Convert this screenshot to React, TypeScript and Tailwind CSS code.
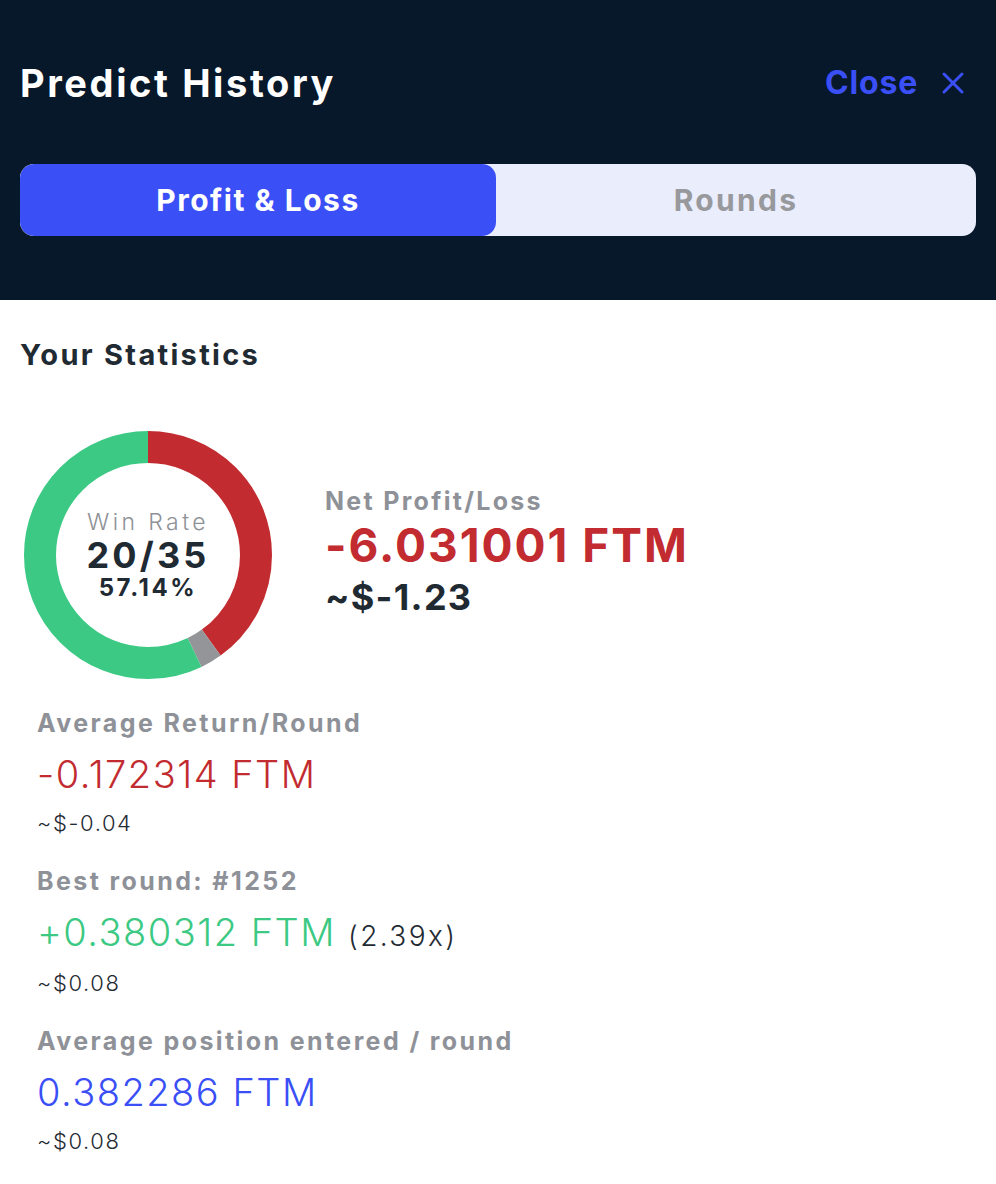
import { X } from "lucide-react"

const Donut = () => {
  const r = 108
  const c = 2 * Math.PI * r
  // 14 lost, 1 other, 20 won out of 35
  const segs = [
    { color: "#c22b30", from: 0, len: 14 / 35 },
    { color: "#939598", from: 14 / 35, len: 1 / 35 },
    { color: "#3cc983", from: 15 / 35, len: 20 / 35 },
  ]
  return (
    <div className="relative w-[248px] h-[248px] shrink-0">
      <svg width="248" height="248" viewBox="0 0 248 248" className="-rotate-90">
        {segs.map((s) => (
          <circle
            key={s.color}
            cx="124"
            cy="124"
            r={r}
            fill="none"
            stroke={s.color}
            strokeWidth="32"
            strokeDasharray={`${s.len * c} ${c}`}
            strokeDashoffset={-s.from * c}
          />
        ))}
      </svg>
      <div className="absolute inset-0 flex flex-col items-center justify-center">
        <span className="text-[23px] leading-[28px] tracking-[3.4px] text-[#8e9197] font-light">Win Rate</span>
        <span className="text-[36px] leading-[38px] tracking-[3.2px] font-bold text-[#1f2a33]">20/35</span>
        <span className="text-[24px] leading-[28px] tracking-[2.6px] font-bold text-[#1f2a33]">57.14%</span>
      </div>
    </div>
  )
}

const Stat = ({ label, value, valueColor, extra, usd }: { label: string; value: string; valueColor: string; extra?: string; usd: string }) => (
  <div className="flex flex-col">
    <span className="text-[25px] leading-[32px] tracking-[2.4px] font-bold text-[#8e9197]">{label}</span>
    <div className="mt-[12px] flex items-baseline gap-[12px]">
      <span className={`text-[38px] leading-[46px] tracking-[1.5px] font-light ${valueColor}`}>{value}</span>
      {extra && <span className="text-[28px] tracking-[2.4px] text-[#1f2a33] font-light">{extra}</span>}
    </div>
    <span className="mt-[11px] text-[22px] leading-[30px] tracking-[1.6px] text-[#1f2a33] font-light">{usd}</span>
  </div>
)

export default function App() {
  return (
    <div className="w-[996px] min-h-[1184px] bg-white font-['Inter','Noto_Sans',sans-serif]">
      {/* Header */}
      <div className="bg-[#06182a] h-[300px] px-[20px] pt-[58px]">
        <div className="flex items-center justify-between">
          <h1 className="text-[38px] leading-[50px] font-bold text-white tracking-[2.6px]">Predict History</h1>
          <button className="flex items-center gap-[17px] text-[#3a4ff6] mr-[5px]">
            <span className="text-[32px] font-bold tracking-[0.8px]">Close</span>
            <X size={36} strokeWidth={2} />
          </button>
        </div>
        <div className="mt-[56px] flex h-[72px] rounded-[14px] bg-[#eaedfc] overflow-hidden">
          <div className="w-[476px] bg-[#3a4ff6] rounded-[14px] flex items-center justify-center text-white text-[30px] font-bold tracking-[1.5px]">
            Profit &amp; Loss
          </div>
          <div className="flex-1 flex items-center justify-center text-[#98999d] text-[30px] font-bold tracking-[2.3px]">Rounds</div>
        </div>
      </div>

      {/* Body */}
      <div className="px-[20px] pt-[37px]">
        <h2 className="text-[29px] leading-[36px] font-bold text-[#1f2a33] tracking-[2.3px]">Your Statistics</h2>
        <div className="mt-[58px] flex items-start">
          <div className="ml-[4px]">
            <Donut />
          </div>
          <div className="ml-[53px] mt-[54px] flex flex-col">
            <span className="text-[25px] leading-[32px] tracking-[2.3px] font-bold text-[#8e9197]">Net Profit/Loss</span>
            <span className="mt-[2px] text-[46px] leading-[52px] tracking-[2px] font-bold text-[#c22b30]">-6.031001 FTM</span>
            <span className="mt-[4px] text-[36px] leading-[44px] tracking-[1.3px] font-bold text-[#1f2a33]">~$-1.23</span>
          </div>
        </div>
        <div className="mt-[28px] pl-[17px] flex flex-col gap-[27px]">
          <Stat label="Average Return/Round" value="-0.172314 FTM" valueColor="text-[#c22b30]" usd="~$-0.04" />
          <Stat label="Best round: #1252" value="+0.380312 FTM" valueColor="text-[#3cc983]" extra="(2.39x)" usd="~$0.08" />
          <Stat label="Average position entered / round" value="0.382286 FTM" valueColor="text-[#3a4ff6]" usd="~$0.08" />
        </div>
      </div>
    </div>
  )
}
